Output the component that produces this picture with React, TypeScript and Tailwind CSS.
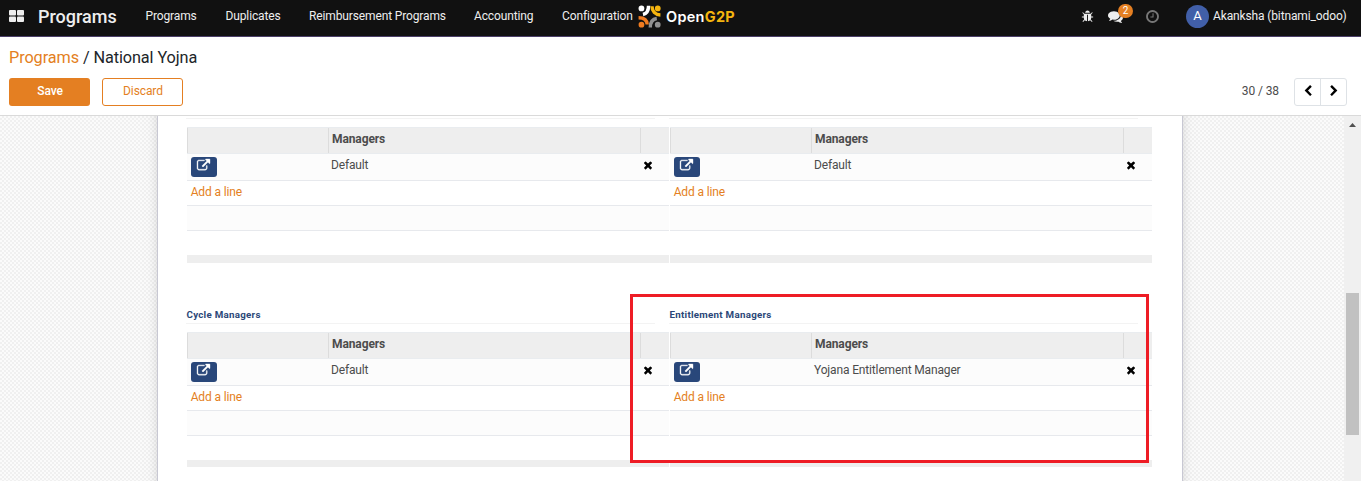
import React from "react";

const ICONS = {
  link: "M1408 928v320q0 119-84.5 203.5t-203.5 84.5h-832q-119 0-203.5-84.5t-84.5-203.5v-832q0-119 84.5-203.5t203.5-84.5h704q14 0 23 9t9 23v64q0 14-9 23t-23 9h-704q-66 0-113 47t-47 113v832q0 66 47 113t113 47h832q66 0 113-47t47-113v-320q0-14 9-23t23-9h64q14 0 23 9t9 23zm384-864v512q0 26-19 45t-45 19-45-19l-176-176-652 652q-10 10-23 10t-23-10l-114-114q-10-10-10-23t10-23l652-652-176-176q-19-19-19-45t19-45 45-19h512q26 0 45 19t19 45z",
  times: "M1490 1322q0 40-28 68l-136 136q-28 28-68 28t-68-28l-294-294-294 294q-28 28-68 28t-68-28l-136-136q-28-28-28-68t28-68l294-294-294-294q-28-28-28-68t28-68l136-136q28-28 68-28t68 28l294 294 294-294q28-28 68-28t68 28l136 136q28 28 28 68t-28 68l-294 294 294 294q28 28 28 68z",
  bug: "M1696 960q0 26-19 45t-45 19h-224q0 171-67 290l208 209q19 19 19 45t-19 45q-18 19-45 19t-45-19l-198-197q-5 5-15 13t-42 28.5-65 36.5-82 29-97 13v-896h-128v896q-51 0-101.5-13.5t-87-33-66-39-43.5-32.5l-15-14-183 207q-20 21-48 21-24 0-43-16-19-18-20.5-44.5t15.5-46.5l202-227q-58-114-58-274h-224q-26 0-45-19t-19-45 19-45 45-19h224v-294l-173-173q-19-19-19-45t19-45 45-19 45 19l173 173h844l173-173q19-19 45-19t45 19 19 45-19 45l-173 173v294h224q26 0 45 19t19 45zm-480-576h-640q0-133 93.5-226.5t226.5-93.5 226.5 93.5 93.5 226.5z",
  comments: "M1408 768q0 139-94 257t-256.5 186.5-353.5 68.5q-86 0-176-16-124 88-278 128-36 9-86 16h-3q-11 0-20.5-8t-11.5-21q-1-3-1-6.5t.5-6.5 2-6l2.5-5 3.5-5.5 4-5 4.5-5 4-4.5q5-6 23-25t26-29.5 22.5-29 25-38.5 20.5-44q-124-72-195-177t-71-224q0-139 94-257t256.5-186.5 353.5-68.5 353.5 68.5 256.5 186.5 94 257zm384 256q0 120-71 224.5t-195 176.5q10 24 20.5 44t25 38.5 22.5 29 26 29.5 23 25q1 1 4 4.5t4.5 5 4 5 3.5 5.5l2.5 5 2 6 .5 6.5-1 6.5q-3 14-13 22t-22 7q-50-7-86-16-154-40-278-128-90 16-176 16-271 0-472-132 58 4 88 4 161 0 309-45t264-129q125-92 192-212t67-254q0-77-23-152 129 71 204 178t75 230z",
  clock: "M1024 544v448q0 14-9 23t-23 9h-320q-14 0-23-9t-9-23v-64q0-14 9-23t23-9h224v-352q0-14 9-23t23-9h64q14 0 23 9t9 23zm416 352q0-148-73-273t-198-198-273-73-273 73-198 198-73 273 73 273 198 198 273 73 273-73 198-198 73-273zm224 0q0 209-103 385.5t-279.5 279.5-385.5 103-385.5-103-279.5-279.5-103-385.5 103-385.5 279.5-279.5 385.5-103 385.5 103 279.5 279.5 103 385.5z",
  left: "M1427 301l-531 531 531 531q19 19 19 45t-19 45l-166 166q-19 19-45 19t-45-19l-742-742q-19-19-19-45t19-45l742-742q19-19 45-19t45 19l166 166q19 19 19 45t-19 45z",
  right: "M1363 877l-742 742q-19 19-45 19t-45-19l-166-166q-19-19-19-45t19-45l531-531-531-531q-19-19-19-45t19-45l166-166q19-19 45-19t45 19l742 742q19 19 19 45t-19 45z",
};

function Icon({ name, className }: { name: keyof typeof ICONS; className: string }) {
  return (
    <svg viewBox="0 0 1792 1792" fill="currentColor" stroke="currentColor" className={`shrink-0 overflow-visible ${className}`}>
      <path d={ICONS[name]} />
    </svg>
  );
}

function Logo() {
  return (
    <div className="ml-[6px] flex items-center pt-px">
      <svg viewBox="0 0 24 24" className="h-[23px] w-[23px] shrink-0">
        <g fill="none" strokeWidth="3.6">
          <path d="M11 0.8C11 5.6 9.4 9 5.2 9.9" stroke="#fff" />
          <path d="M14.6 1.4C14.6 6.3 17.9 10.2 23.4 10.4" stroke="#f5b50f" />
          <path d="M0.6 13.2C5.8 13.2 9.5 15.4 9.6 20.4" stroke="#f07c20" />
          <path d="M12.8 23.4C12.8 18.2 15 14.6 19.6 14" stroke="#909090" />
        </g>
        <circle cx="3.6" cy="3.6" r="3" fill="#fff" />
        <circle cx="20.6" cy="3.6" r="3" fill="#f5b50f" />
        <circle cx="3.6" cy="20.6" r="3" fill="#f07c20" />
        <circle cx="20.6" cy="20.6" r="3" fill="#909090" />
      </svg>
      <span className="ml-[5px] whitespace-nowrap font-['Inter'] text-[14.5px] leading-5 font-semibold tracking-[0.28px] text-white">
        Open<span className="font-bold text-[#f5b50f]">G2P</span>
      </span>
    </div>
  );
}

function Navbar() {
  return (
    <header className="flex h-[37px] items-center border-b border-[#4b3f69] bg-[#111] pb-1 text-[12px] tracking-[-0.13px] text-[#eee]">
      <svg viewBox="0 0 15 12" fill="currentColor" className="ml-[9px] h-3 w-[15px] shrink-0">
        <rect width="7" height="5.5" rx="1" />
        <rect x="8" width="7" height="5.5" rx="1" />
        <rect y="6.5" width="7" height="5.5" rx="1" />
        <rect x="8" y="6.5" width="7" height="5.5" rx="1" />
      </svg>
      <span className="ml-[14px] w-[107.5px] shrink-0 whitespace-nowrap text-[18px] font-medium tracking-normal">Programs</span>
      <nav className="flex shrink-0 whitespace-nowrap">
        <a className="w-20">Programs</a>
        <a className="w-[83.5px]">Duplicates</a>
        <a className="w-[165px]">Reimbursement Programs</a>
        <a className="w-[88px]">Accounting</a>
        <a className="w-[70px]">Configuration</a>
      </nav>
      <Logo />
      <div className="ml-auto flex items-center">
        <Icon name="bug" className="mr-[14px] h-[13px] w-[13px]" />
        <div className="relative mt-px mr-[22px]">
          <Icon name="comments" className="h-[15px] w-[15px]" />
          <span className="absolute -top-[5px] left-[10px] flex h-[14px] w-[15px] items-center justify-center rounded-full bg-[#e47f22] text-[10px] leading-none text-white">
            2
          </span>
        </div>
        <Icon name="clock" className="mr-[26px] h-[15px] w-[15px] text-[#777]" />
        <span className="flex h-[23px] w-[23px] items-center justify-center rounded-full bg-[#415fa8] text-[13px] text-white">A</span>
        <span className="ml-[4px] w-[148px] whitespace-nowrap">Akanksha (bitnami_odoo)</span>
      </div>
    </header>
  );
}

function ControlPanel() {
  return (
    <section className="flex h-[79px] flex-col border-b border-[#dadada] bg-white px-[9px] pt-[9px]">
      <h1 className="text-[16.25px] leading-6 tracking-[-0.09px] text-[#212529]">
        <span className="text-[#e47f22]">Programs</span> / National Yojna
      </h1>
      <div className="mt-2 flex items-start text-[12px] tracking-[-0.1px]">
        <button className="h-7 w-[81px] rounded-[3px] bg-[#e47f22] pb-[2px] pl-px font-medium text-white">Save</button>
        <button className="ml-3 h-7 w-[81px] rounded-[3px] border border-[#e47f22] pb-[2px] pl-px text-[#e47f22]">Discard</button>
        <span className="mt-1 mr-[15px] ml-auto text-[#4c4c4c]">30 / 38</span>
        <div className="mr-[5px] flex h-7 w-[53px] rounded-[3px] border border-[#dee2e6] text-black">
          <button className="flex w-[26px] items-center justify-center border-r border-[#dee2e6] pb-[3px]">
            <Icon name="left" className="h-3 w-3" />
          </button>
          <button className="flex w-[25px] items-center justify-center pb-[3px]">
            <Icon name="right" className="h-3 w-3" />
          </button>
        </div>
      </div>
    </section>
  );
}

function ManagerTable({ title, manager }: { title?: string; manager: string }) {
  return (
    <div className="w-[482px] text-[12px] tracking-[-0.15px] text-[#4c4c4c]">
      <div className="-ml-px h-[17px] w-[469px] border-b border-[#f3f3f3] pl-[0.5px] text-[9.75px] leading-4 font-bold tracking-[0.27px] text-[#2b4778]">
        {title}
      </div>
      <div className="mt-2 flex h-[27px] border-y border-[#e9ecef] bg-[#eee] font-bold leading-[23px] tracking-[-0.1px]">
        <div className="w-[141px] border-l border-[#dcdcdc]" />
        <div className="w-[312px] border-l border-[#dcdcdc] pl-[3px]">Managers</div>
        <div className="flex-1 border-l border-[#dcdcdc]" />
      </div>
      <div className="flex h-[27px] border-b border-[#e7e9ed] bg-[#fcfcfc] leading-[22px]">
        <div className="w-[144px] pt-[3px] pl-[3.5px]">
          <button className="flex h-5 w-[26px] items-start justify-center rounded-[3px] bg-[#29477a] pt-[2px] text-white">
            <svg viewBox="0 0 1792 1792" fill="currentColor" stroke="currentColor" strokeWidth="50" className="h-[13px] w-[13px] overflow-visible">
              <path d={ICONS.link} />
            </svg>
          </button>
        </div>
        <div className="w-[310.5px]">{manager}</div>
        <Icon name="times" className="mt-[5px] h-3 w-3 text-black" />
      </div>
      <div className="h-[25px] border-b border-[#e7e9ed] pl-[3.7px] leading-[23px] text-[#e47f22]">Add a line</div>
      <div className="h-[25px] border-b border-[#e7e9ed] bg-[#fcfcfc]" />
      <div className="h-6" />
      <div className={title ? "h-[7px] bg-[#eee]" : "h-2 bg-[#eee]"} />
    </div>
  );
}

export default function App() {
  return (
    <div className="relative flex h-[481px] w-[1361px] flex-col overflow-hidden font-['Roboto',sans-serif]">
      <Navbar />
      <ControlPanel />
      <main className="flex min-h-0 flex-1">
        <div className="flex flex-1 overflow-hidden bg-[repeating-conic-gradient(#f0f0f0_0_25%,#fbfbfb_0_50%)] bg-size-[4px_4px] pl-[157px]">
          <div className="-mt-10 -mb-10 w-[1026px] border-x border-[#c8c8d3] bg-white pt-[26px] pl-[29px] shadow-[0_5px_20px_-15px_#000]">
            <div className="flex gap-px">
              <ManagerTable manager="Default" />
              <ManagerTable manager="Default" />
            </div>
            <div className="mt-11 flex gap-px">
              <ManagerTable title="Cycle Managers" manager="Default" />
              <ManagerTable title="Entitlement Managers" manager="Yojana Entitlement Manager" />
            </div>
          </div>
        </div>
        <div className="flex w-[17px] flex-col items-center bg-[#f0f0f0] pt-[7px]">
          <svg viewBox="0 0 7 4" className="h-1 w-[7px]">
            <path d="M0 4L3.5 0L7 4Z" fill="#505050" />
          </svg>
          <div className="mt-[166px] h-[142px] w-[13px] bg-[#c1c1c1]" />
        </div>
      </main>
      <div className="absolute top-[294px] left-[630px] h-[169px] w-[519px] border-[3px] border-[#ee1c25]" />
    </div>
  );
}
